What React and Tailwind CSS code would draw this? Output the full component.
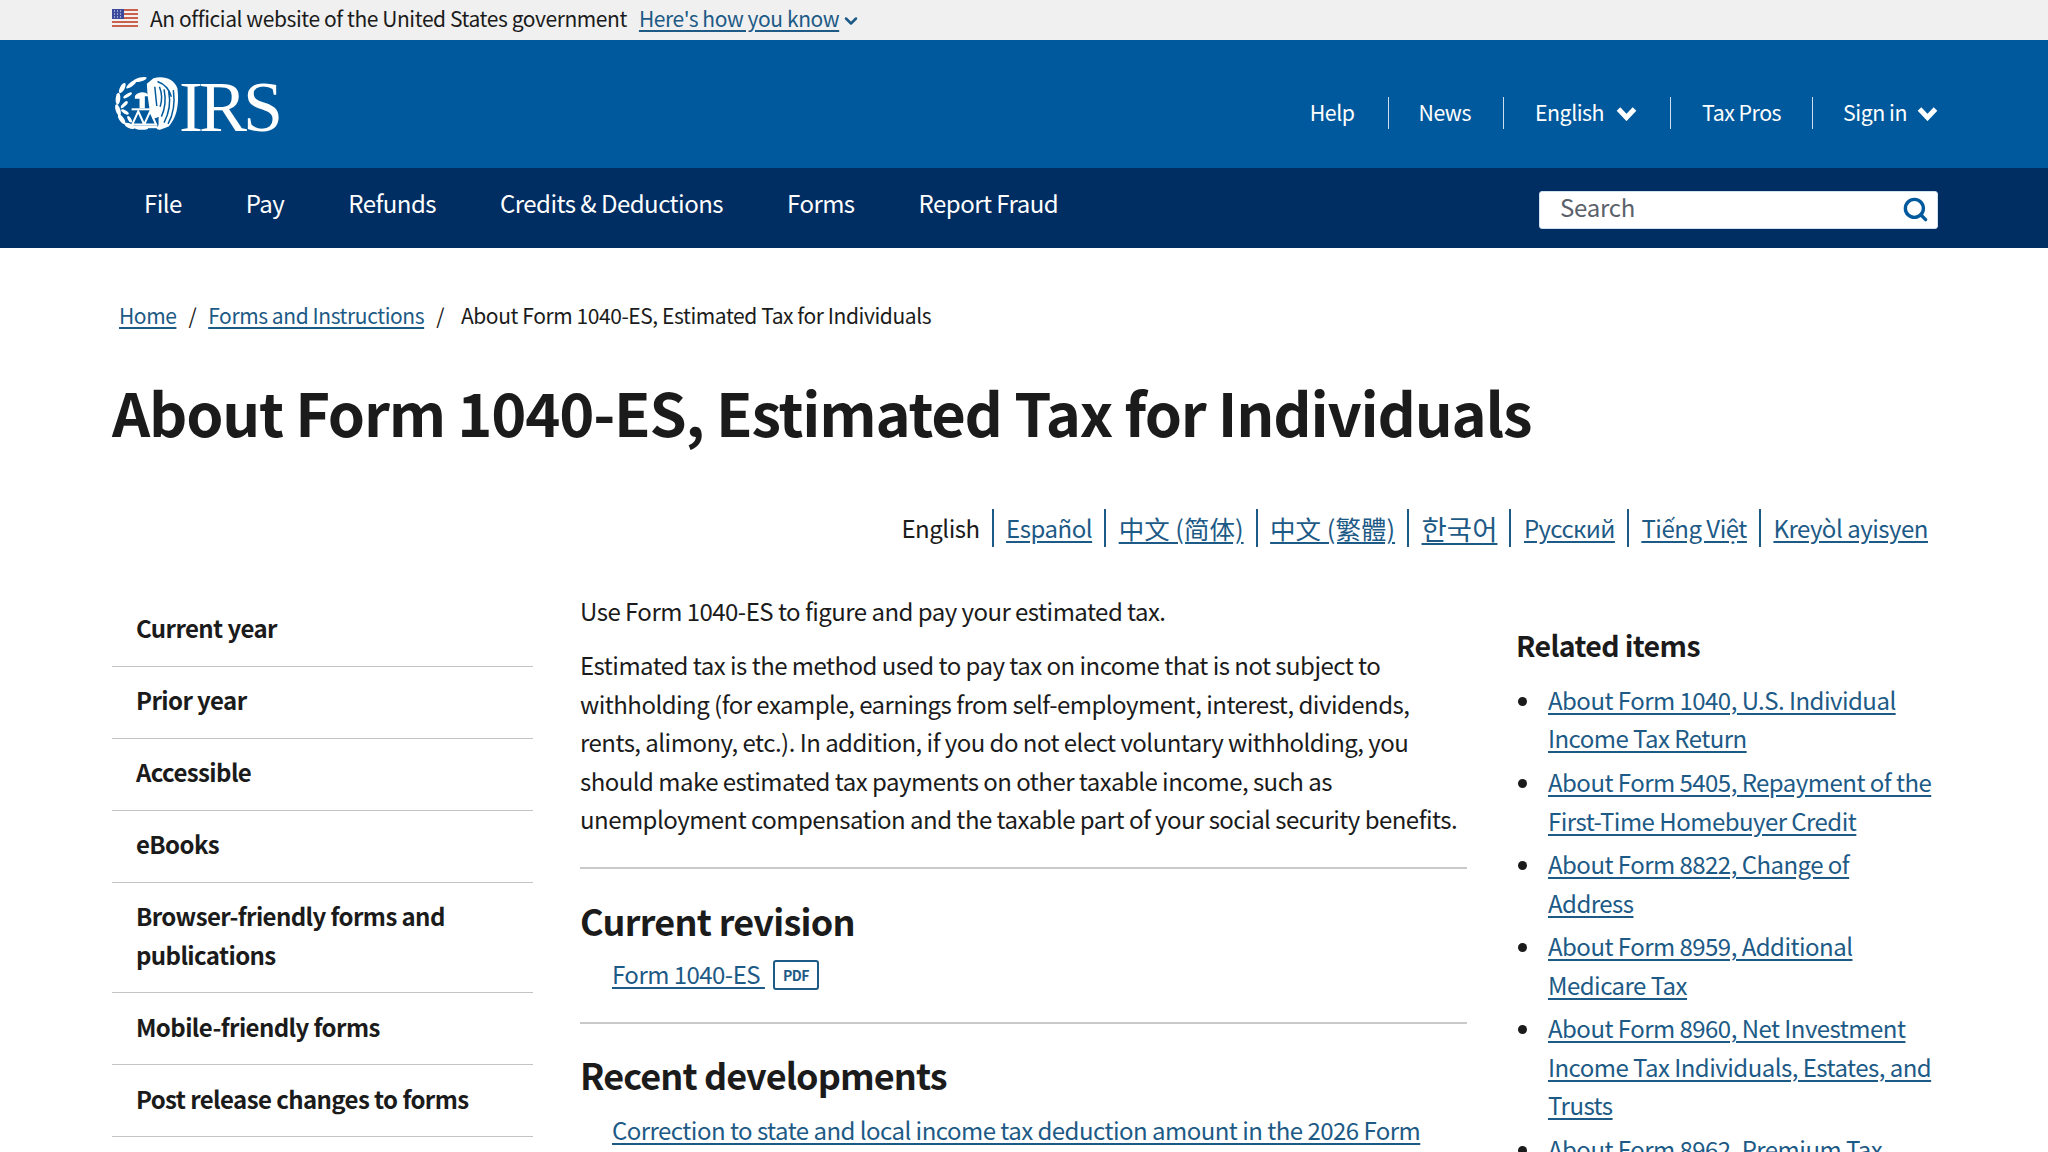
import React from "react";
import { ChevronDown, Search } from "lucide-react";

const sideItems = [
    "Current year",
    "Prior year",
    "Accessible",
    "eBooks",
    "Browser-friendly forms and publications",
    "Mobile-friendly forms",
    "Post release changes to forms",
];

const languages = [
    { label: "Español", size: "tracking-[-0.02em]" },
    { label: "中文 (简体)", size: "text-[25.5px]" },
    { label: "中文 (繁體)", size: "text-[25.5px]" },
    { label: "한국어", size: "text-[27.5px]" },
    { label: "Русский", size: "tracking-[-0.025em]" },
    { label: "Tiếng Việt", size: "tracking-[-0.02em]" },
    { label: "Kreyòl ayisyen", size: "tracking-[-0.02em]" },
];

const related = [
    "About Form 1040, U.S. Individual Income Tax Return",
    "About Form 5405, Repayment of the First-Time Homebuyer Credit",
    "About Form 8822, Change of Address",
    "About Form 8959, Additional Medicare Tax",
    "About Form 8960, Net Investment Income Tax Individuals, Estates, and Trusts",
    "About Form 8962, Premium Tax Credit",
];

const linkClass = "text-[#1d5a86] underline underline-offset-[3px]";

function Flag() {
    return (
        <svg width="26" height="18" viewBox="0 0 26 18" className="shrink-0">
            <rect width="26" height="18" fill="#f4f1ef" />
            <rect y="0" width="26" height="2" fill="#c8624f" />
            <rect y="4" width="26" height="2" fill="#c8624f" />
            <rect y="8" width="26" height="2" fill="#c8624f" />
            <rect y="12" width="26" height="2" fill="#c8624f" />
            <rect y="16" width="26" height="2" fill="#c8624f" />
            <rect width="12" height="10" fill="#3b4a9c" />
            <path d="M2 2h1M5 2h1M8 2h1M2 5h1M5 5h1M8 5h1M2 8h1M5 8h1M8 8h1" stroke="#fff" strokeWidth="1" />
        </svg>
    );
}

function Chevron() {
    return (
        <svg width="21" height="15" viewBox="0 0 21 15" className="shrink-0 mt-[2px]">
            <path d="M2.5 3 10.5 11.5 18.5 3" stroke="#fff" strokeWidth="5" fill="none" />
        </svg>
    );
}

function Seal() {
    const leaves = [
        [76, 10, 20, 6, -14], [50, 24, 20, 6, -38], [22, 36, 17, 7, -62], [38, 58, 15, 5, -32],
        [9, 68, 18, 7, -85], [28, 86, 14, 5, -45], [9, 102, 18, 7, 72], [30, 108, 13, 5, 30],
        [20, 130, 17, 7, 55], [44, 130, 11, 5, 60], [44, 150, 17, 7, 25], [80, 157, 20, 5, 2],
    ];
    return (
        <svg width="63" height="54" viewBox="0 0 190 162" className="shrink-0">
            {leaves.map(([x, y, rx, ry, r], i) => (
                <ellipse key={i} cx={x} cy={y} rx={rx} ry={ry} transform={`rotate(${r} ${x} ${y})`} fill="#fff" />
            ))}
            <path d="M116 6C150-2 178 10 188 36c6 44 0 88-26 116l-24 9c-10 2-16-2-10-8 6-6 2-14 4-30l-18 6-10-30-6-44-2-32Z" fill="#fff" />
            <path d="M128 16c22 8 36 24 42 46M176 42c5 36 2 70-16 102M162 46c6 32 2 64-14 94M148 40c6 30 4 56-8 82M134 32c8 20 8 42 2 60M120 32l6 58" stroke="#00599c" strokeWidth="4.5" fill="none" />
            <path d="M60 60c8-12 24-14 34-9l10 10H90v36H74V68H60Z" fill="#fff" />
            <path d="M50 100h72" stroke="#fff" strokeWidth="6" />
            <path d="M70 106 52 146h36ZM106 106 88 146h36Z" stroke="#fff" strokeWidth="6" fill="none" />
            <path d="M50 153h78" stroke="#fff" strokeWidth="8" />
        </svg>
    );
}

export default function App() {
    return (
        <div className="w-full h-[1152px] overflow-hidden bg-white text-[#1b1b1b] font-['Noto_Sans_CJK_SC','Noto_Sans_CJK_KR',sans-serif]">
            {/* gov banner */}
            <div className="h-10 bg-[#f0f0f0] flex items-center pl-[112px] text-[21px] tracking-[-0.02em] leading-[36px] pb-[5px]">
                <Flag />
                <span className="ml-3">An official website of the United States government</span>
                <a className={`ml-3 ${linkClass}`}>Here's how you know</a>
                <ChevronDown size={20} strokeWidth={3} className="ml-[2px] mt-[7px] text-[#1d5a86]" />
            </div>

            {/* header */}
            <header className="h-32 bg-[#00599c] flex justify-between pl-[115px] pr-[110px] text-white">
                <div className="flex items-start pt-[36px] h-fit">
                    <Seal />
                    <span className="font-['Liberation_Serif',serif] text-[72px] leading-[62px] tracking-[-4px] ml-[1px]">IRS</span>
                </div>
                <nav className="flex items-center h-8 mt-[57px] text-[21.3px] tracking-[-0.022em] leading-[30px]">
                    <a className="pr-[33px] h-8 flex items-center pb-[2px]">Help</a>
                    <a className="pl-[30px] pr-[32px] border-l border-white/80 h-8 flex items-center pb-[2px]">News</a>
                    <a className="pl-[31px] pr-[33px] border-l border-white/80 h-8 flex items-center gap-[12px] pb-[2px]">English <Chevron /></a>
                    <a className="px-[31px] border-l border-white/80 h-8 flex items-center pb-[2px]">Tax Pros</a>
                    <a className="pl-[30px] border-l border-white/80 h-8 flex items-center gap-[10px] pb-[2px]">Sign in <Chevron /></a>
                </nav>
            </header>

            {/* main nav */}
            <div className="h-20 bg-[#002d62] flex justify-between pl-[112px] pr-[110px] text-white">
                <nav className="flex pt-[15px] text-[24px] tracking-[-0.022em] leading-10 h-fit">
                    <a className="px-[32px]">File</a>
                    <a className="px-[32px]">Pay</a>
                    <a className="px-[32px]">Refunds</a>
                    <a className="px-[32px]">Credits &amp; Deductions</a>
                    <a className="px-[32px]">Forms</a>
                    <a className="px-[32px]">Report Fraud</a>
                </nav>
                <div className="mt-[23px] w-[399px] h-[38px] bg-white border border-[#cfe0ee] rounded-[3px] flex items-center justify-between pl-5 pr-2 text-[#5b616b] text-[24px] tracking-[-0.01em]">
                    <span className="-mt-[7px]">Search</span>
                    <Search size={27} strokeWidth={3} className="text-[#00599c] -mt-[2px]" />
                </div>
            </div>

            {/* breadcrumb */}
            <div className="mt-[48px] ml-[119px] flex text-[21px] tracking-[-0.02em] leading-[38px]">
                <a className={linkClass}>Home</a>
                <span className="mx-[12px]">/</span>
                <a className={linkClass}>Forms and Instructions</a>
                <span className="ml-[12px] mr-[17px]">/</span>
                <span>About Form 1040-ES, Estimated Tax for Individuals</span>
            </div>

            <h1 className="mt-[41px] ml-[112px] text-[59.6px] tracking-[-0.02em] leading-[72px] font-bold">
                About Form 1040-ES, Estimated Tax for Individuals
            </h1>

            {/* languages */}
            <div className="mt-[62px] flex justify-end pr-[108px] text-[24px] leading-[38px]">
                <span className="pr-[12px] tracking-[-0.02em]">English</span>
                {languages.map((lang) => (
                    <span key={lang.label} className={`pl-[12.5px] pr-[12px] border-l-2 border-[#1d5a86] ${lang.size}`}>
                        <a className={linkClass}>{lang.label}</a>
                    </span>
                ))}
            </div>

            {/* three columns */}
            <div className="mt-[45px] pl-[112px] pr-[110px] grid grid-cols-[421px_887px_422px] gap-x-[47px] text-[24px] tracking-[-0.022em] leading-[38.4px]">
                <aside className="pt-[2.6px]">
                    {sideItems.map((item) => (
                        <div key={item} className="px-6 pt-[14.7px] pb-[17.9px] border-b border-[#c4c4c4] font-bold tracking-[-0.025em]">
                            {item}
                        </div>
                    ))}
                </aside>

                <main>
                    <p>Use Form 1040-ES to figure and pay your estimated tax.</p>
                    <p className="mt-4">
                        Estimated tax is the method used to pay tax on income that is not subject to withholding (for example, earnings from self-employment, interest, dividends, rents, alimony, etc.). In addition, if you do not elect voluntary withholding, you should make estimated tax payments on other taxable income, such as unemployment compensation and the taxable part of your social security benefits.
                    </p>
                    <hr className="mt-[29px] border-t-2 border-[#c9c9c9]" />
                    <h2 className="mt-[29px] text-[36px] tracking-[-0.02em] leading-[44px] font-bold">Current revision</h2>
                    <div className="mt-[13px] pl-8 flex items-center">
                        <a className={linkClass}>Form 1040-ES&nbsp;</a>
                        <span className="ml-[8px] w-[46px] h-[30px] border-2 border-[#1d5a86] rounded-[3px] flex items-center justify-center text-[14px] leading-none font-bold text-[#1d5a86]">PDF</span>
                    </div>
                    <hr className="mt-[28px] border-t-2 border-[#c9c9c9]" />
                    <h2 className="mt-[28px] text-[36px] tracking-[-0.025em] leading-[44px] font-bold">Recent developments</h2>
                    <div className="mt-[15px] pl-8">
                        <a className={linkClass}>Correction to state and local income tax deduction amount in the 2026 Form 1040-ES</a>
                    </div>
                </main>

                <aside className="ml-[2px]">
                    <h3 className="mt-[33px] text-[28.5px] tracking-[-0.022em] leading-10 font-bold">Related items</h3>
                    <ul className="mt-[16px] pl-[27px] list-disc">
                        {related.map((item) => (
                            <li key={item} className="pl-[5px] mb-[5.3px]">
                                <a className={linkClass}>{item}</a>
                            </li>
                        ))}
                    </ul>
                </aside>
            </div>
        </div>
    );
}
